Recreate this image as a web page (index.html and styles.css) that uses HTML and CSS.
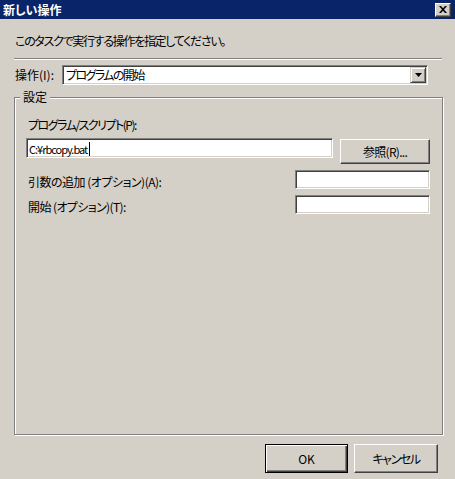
FILE: index.html
```html
<!DOCTYPE html>
<html lang="ja">
<head>
<meta charset="utf-8">
<title>新しい操作</title>
<link rel="stylesheet" href="styles.css">
</head>
<body>
<div class="window">
  <div class="titlebar">
    <span class="title">新しい操作</span>
    <span class="close">
      <svg width="8" height="7" viewBox="0 0 8 7"><path d="M0 0h2l2 2.2L6 0h2L5 3.5 8 7H6L4 4.8 2 7H0l3-3.5z" fill="#000"/></svg>
    </span>
  </div>
  <div class="body">
    <p class="intro">このタスクで実行する操作を指定してください。</p>
    <div class="sep"></div>
    <div class="action-row">
      <span class="action-label">操作(I):</span>
      <div class="combo">
        <span class="combo-value">プログラムの開始</span>
        <span class="combo-btn"><svg width="7" height="4" viewBox="0 0 7 4"><path d="M0 0h7L3.5 4z" fill="#000"/></svg></span>
      </div>
    </div>
    <fieldset class="group">
      <legend>設定</legend>
      <div class="field-label">プログラム/スクリプト(P):</div>
      <div class="prog-row">
        <div class="input prog">C:¥rbcopy.bat<span class="caret"></span></div>
        <button class="btn browse">参照(R)...</button>
      </div>
      <div class="opt-row">
        <span class="opt-label args">引数の追加 (オプション)(A):</span>
        <div class="input opt"></div>
      </div>
      <div class="opt-row">
        <span class="opt-label start">開始 (オプション)(T):</span>
        <div class="input opt"></div>
      </div>
    </fieldset>
    <div class="buttons">
      <button class="btn default">OK</button>
      <button class="btn cancel">キャンセル</button>
    </div>
  </div>
</div>
</body>
</html>
```
FILE: styles.css
```css
* { box-sizing: border-box; }
html, body { margin: 0; padding: 0; background: #d4d0c8; }
body {
  font-family: "Noto Sans CJK JP", "Liberation Sans", sans-serif;
  font-size: 12px;
  font-feature-settings: "palt";
  color: #000;
}
.window {
  width: 455px;
  height: 479px;
  background: #d4d0c8;
  overflow: hidden;
}
.titlebar {
  height: 19px;
  background: #0a246a;
  display: flex;
  align-items: flex-start;
  justify-content: space-between;
}
.title {
  color: #fff;
  font-weight: bold;
  font-size: 12px;
  line-height: 19px;
  padding-left: 3px;
}
.close {
  margin: 3px 4px 0 0;
  width: 16px;
  height: 14px;
  background: #d4d0c8;
  border: 1px solid;
  border-color: #fff #404040 #404040 #fff;
  box-shadow: inset -1px -1px 0 #808080;
  display: flex;
  align-items: center;
  justify-content: center;
}
.close svg { display: block; margin: 0 1px 1px 0; }
.body {
  padding: 0 13px 0 14px;
}
.intro {
  margin: 14px 0 0 1px;
  line-height: 16px;
  height: 16px;
  letter-spacing: -1.3px;
}
.sep {
  margin-top: 9px;
  height: 2px;
  border-top: 1px solid #808080;
  border-bottom: 1px solid #fff;
}
.action-row {
  margin-top: 5px;
  display: flex;
  align-items: center;
}
.action-label {
  width: 48px;
  padding-left: 1px;
  line-height: 16px;
}
.combo {
  width: 366px;
  height: 20px;
  background: #fff;
  border: 1px solid;
  border-color: #808080 #fff #fff #808080;
  box-shadow: inset 1px 1px 0 #404040, inset -1px -1px 0 #d4d0c8;
  display: flex;
  align-items: center;
  justify-content: space-between;
  padding: 1px;
}
.combo-value {
  padding-left: 2px;
  line-height: 16px;
  letter-spacing: -1.6px;
}
.combo-btn {
  width: 16px;
  height: 16px;
  background: #d4d0c8;
  border: 1px solid;
  border-color: #d4d0c8 #404040 #404040 #d4d0c8;
  box-shadow: inset 1px 1px 0 #fff, inset -1px -1px 0 #808080;
  display: flex;
  align-items: center;
  justify-content: center;
}
.combo-btn svg { display: block; }
.group {
  margin: 4px 0 0 0;
  width: 429px;
  height: 346px;
  padding: 0 12px 0 11px;
  border: 1px solid #808080;
  box-shadow: inset 1px 1px 0 #fff, 1px 1px 0 #fff;
}
.group legend {
  margin-left: -6px;
  padding: 0 3px;
  line-height: 16px;
  background: #d4d0c8;
}
.field-label {
  margin: 12px 0 0 2px;
  line-height: 16px;
  letter-spacing: -1.5px;
}
.input {
  background: #fff;
  border: 1px solid;
  border-color: #808080 #fff #fff #808080;
  box-shadow: inset 1px 1px 0 #404040, inset -1px -1px 0 #d4d0c8;
}
.prog-row {
  margin-top: 5px;
  display: flex;
  align-items: flex-start;
  gap: 7px;
}
.prog {
  width: 307px;
  height: 20px;
  padding: 2px 0 0 2px;
  line-height: 15px;
  font-size: 11px;
  display: flex;
  align-items: center;
  letter-spacing: -1px;
}
.caret {
  display: inline-block;
  width: 1px;
  height: 14px;
  background: #000;
  margin-left: 2px;
}
.btn {
  font-family: inherit;
  font-size: 12px;
  font-feature-settings: "palt";
  color: #000;
  background: #d4d0c8;
  border: 1px solid;
  border-color: #fff #404040 #404040 #fff;
  box-shadow: inset -1px -1px 0 #808080;
  padding: 0;
  margin: 0;
}
.browse {
  margin-top: 1px;
  width: 90px;
  height: 25px;
  letter-spacing: -0.7px;
}
.opt-row {
  margin-top: 6px;
  display: flex;
  align-items: flex-start;
  justify-content: space-between;
}
.opt-row + .opt-row { margin-top: 5px; }
.opt-label {
  margin: 4px 0 0 2px;
  line-height: 16px;
}
.args { letter-spacing: -0.5px; }
.start { letter-spacing: -0.6px; }
.opt {
  width: 135px;
  height: 19px;
}
.buttons {
  margin-top: 9px;
  padding-right: 4px;
  display: flex;
  justify-content: flex-end;
  gap: 6px;
}
.buttons .btn {
  height: 29px;
}
.default {
  width: 83px;
  border: 1px solid #000;
  box-shadow: inset 1px 1px 0 #fff, inset -1px -1px 0 #404040, inset -2px -2px 0 #808080;
}
.cancel {
  width: 84px;
  letter-spacing: -1.4px;
}
```
